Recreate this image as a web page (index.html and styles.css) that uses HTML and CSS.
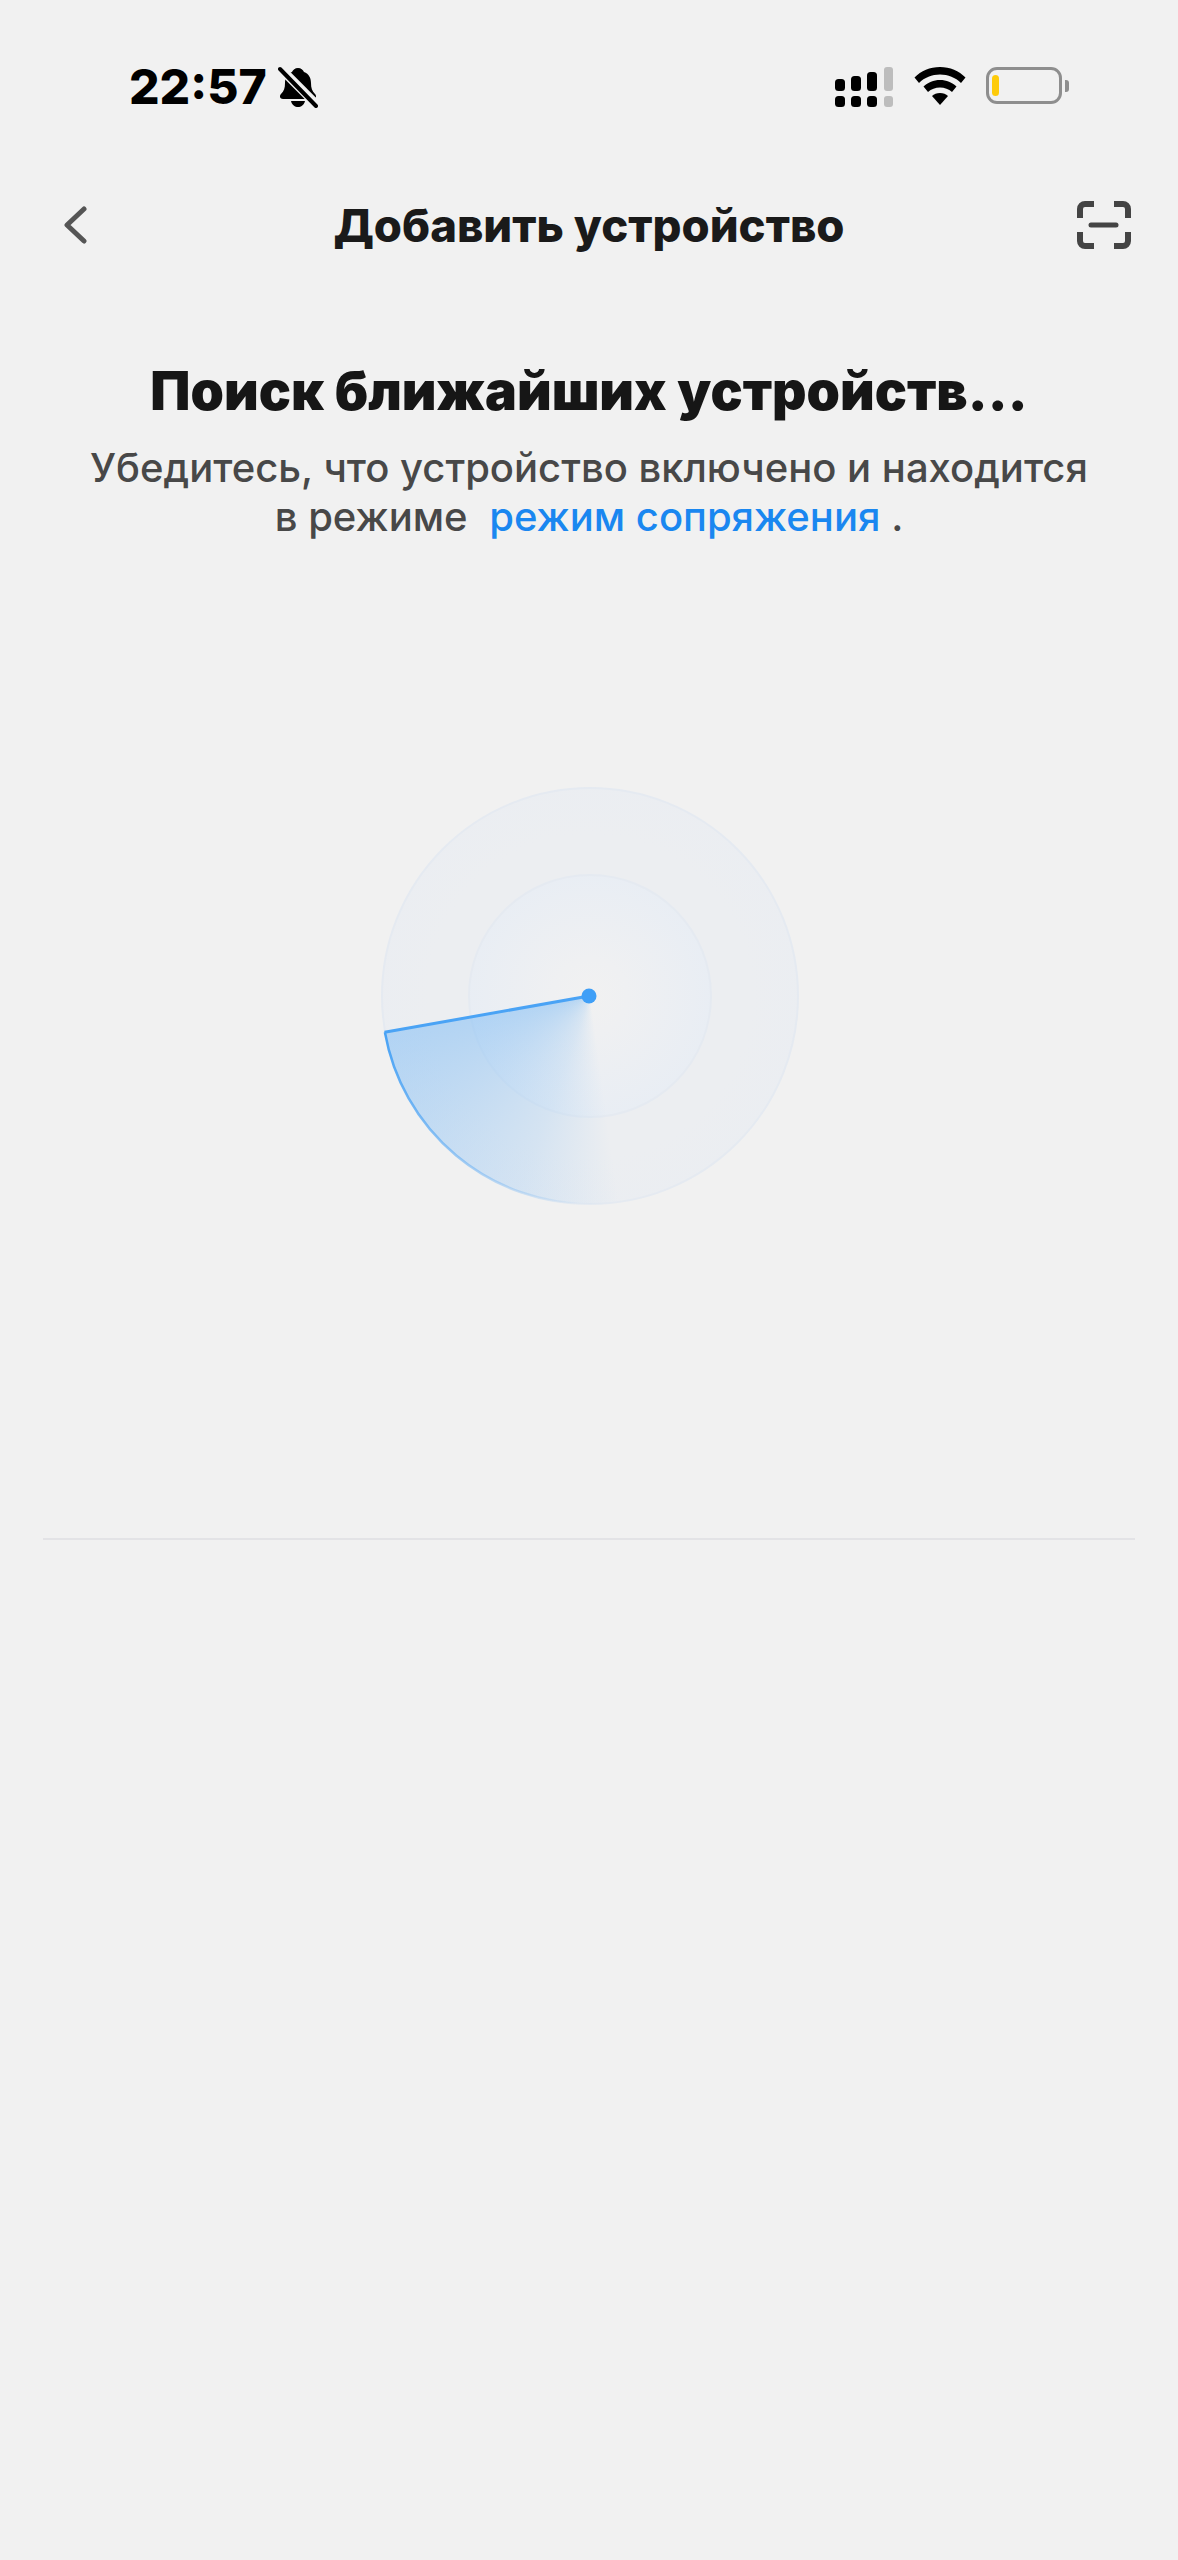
FILE: index.html
```html
<!DOCTYPE html>
<html lang="ru">
<head>
    <meta charset="UTF-8">
    <meta name="viewport" content="width=device-width, initial-scale=1.0">
    <title>Добавить устройство</title>
    <link rel="stylesheet" href="styles.css">
</head>
<body>

<!-- Status bar -->
<div class="status-bar">
    <div class="status-left">
        <span class="time">22:57</span>
        <svg class="bell" width="40" height="42" viewBox="0 0 40 42">
            <path d="M20 2c3 0 5 2 6 4 5 2 7 6 7 11 0 5 1 8 4 11 2 2 1 5-2 5H5c-3 0-4-3-2-5 3-3 4-6 4-11 0-5 2-9 7-11 1-2 3-4 6-4z" fill="#000"/>
            <path d="M13 35h14c-1 4-4 6-7 6s-6-2-7-6z" fill="#000"/>
            <path d="M1 1l38 38" stroke="#f1f1f1" stroke-width="9"/>
            <path d="M2 3l36 37" stroke="#000" stroke-width="4" stroke-linecap="round"/>
        </svg>
    </div>
    <div class="status-right">
        <svg class="signal" width="60" height="42" viewBox="0 0 60 42">
            <rect x="1" y="13" width="10" height="12" rx="3.5" fill="#000"/>
            <rect x="17" y="10" width="10" height="15" rx="3.5" fill="#000"/>
            <rect x="33" y="6" width="10" height="19" rx="3.5" fill="#000"/>
            <rect x="50" y="1" width="9" height="24" rx="3" fill="#bdbdbd"/>
            <rect x="1" y="30" width="10" height="11" rx="3.5" fill="#000"/>
            <rect x="17" y="30" width="10" height="11" rx="3.5" fill="#000"/>
            <rect x="33" y="30" width="10" height="11" rx="3.5" fill="#000"/>
            <rect x="50" y="30" width="9" height="11" rx="3" fill="#bdbdbd"/>
        </svg>
        <svg class="wifi" width="52" height="38" viewBox="0 0 52 38">
            <path d="M26 0c10 0 19 4 25.500 10.500l-4.500 5.500C41.500 10.500 34 7.500 26 7.500S10.500 10.500 5 16L.5 10.500C7 4 16 0 26 0z" fill="#000"/>
            <path d="M26 13c6.500 0 12 2.500 16.500 6.500l-4.500 5.500c-3.300-3-7.400-4.500-12-4.500s-8.700 1.500-12 4.500l-4.500-5.500C14 15.500 19.500 13 26 13z" fill="#000"/>
            <path d="M26 26c3.300 0 6 1.200 8 3L26 38l-8-9c2-1.800 4.700-3 8-3z" fill="#000"/>
        </svg>
        <div class="battery">
            <div class="battery-body"><div class="battery-level"></div></div>
            <div class="battery-cap"></div>
        </div>
    </div>
</div>

<!-- Top navigation -->
<div class="nav">
    <svg class="back" width="24" height="40" viewBox="0 0 24 40">
        <path d="M21 4L4 20l17 16" fill="none" stroke="#555" stroke-width="5" stroke-linecap="round" stroke-linejoin="round"/>
    </svg>
    <div class="nav-title">Добавить устройство</div>
    <svg class="scan" width="54" height="48" viewBox="0 0 54 48">
        <g fill="none" stroke="#444" stroke-width="6">
            <path d="M3 17V8a5 5 0 0 1 5-5h9"/>
            <path d="M37 3h9a5 5 0 0 1 5 5v9"/>
            <path d="M3 31v9a5 5 0 0 0 5 5h9"/>
            <path d="M37 45h9a5 5 0 0 0 5-5v-9"/>
        </g>
        <path d="M14 24h25" stroke="#444" stroke-width="5" stroke-linecap="round"/>
    </svg>
</div>

<!-- Search text -->
<div class="intro">
    <h1>Поиск ближайших устройств...</h1>
    <p>Убедитесь, что устройство включено и находится<br>в режиме <a class="pair-link" href="#">режим сопряжения</a> .</p>
</div>

<!-- Radar -->
<div class="radar-wrap">
    <div class="radar">
        <div class="ring ring-outer"></div>
        <div class="ring ring-inner"></div>
        <div class="sweep"></div>
        <svg class="radar-lines" width="420" height="420" viewBox="0 0 420 420">
            <defs>
                <linearGradient id="edge" gradientUnits="userSpaceOnUse" x1="4" y1="250" x2="200" y2="418">
                    <stop offset="0" stop-color="#4aa3f5"/>
                    <stop offset="1" stop-color="#4aa3f5" stop-opacity="0"/>
                </linearGradient>
            </defs>
            <path d="M4.900 246.200A208 208 0 0 0 210 418" fill="none" stroke="url(#edge)" stroke-width="2.500"/>
            <path d="M4.500 246.300L209 210" fill="none" stroke="#4aa3f5" stroke-width="3"/>
            <circle cx="209" cy="210" r="7.500" fill="#3f9ff7"/>
        </svg>
    </div>
</div>

<div class="divider"></div>

</body>
</html>
```

FILE: styles.css
```css
* {
    box-sizing: border-box;
}

body {
    margin: 0;
    height: 2560px;
    overflow: hidden;
    background: #f1f1f1;
    font-family: "Inter", "Liberation Sans", sans-serif;
}

/* Status bar */
.status-bar {
    height: 172px;
    padding: 66px 109px 0 129px;
    display: flex;
    justify-content: space-between;
    align-items: flex-start;
}

.status-left {
    display: flex;
    align-items: center;
    gap: 11px;
    height: 42px;
}

.time {
    font-size: 48px;
    font-weight: 800;
    line-height: 42px;
    color: #000;
}

.status-right {
    display: flex;
    align-items: flex-start;
    gap: 20px;
}

.wifi {
    margin-top: 1px;
}

.battery {
    display: flex;
    align-items: center;
    gap: 3px;
    margin-top: 1px;
}

.battery-body {
    width: 76px;
    height: 37px;
    border: 3px solid #8e8e8e;
    border-radius: 11px;
    padding: 5px 3px;
}

.battery-level {
    width: 7px;
    height: 21px;
    border-radius: 4px;
    background: #fecb0a;
}

.battery-cap {
    width: 4px;
    height: 12px;
    border-radius: 0 3px 3px 0;
    background: #8e8e8e;
}

/* Navigation */
.nav {
    height: 106px;
    padding: 0 47px;
    display: grid;
    grid-template-columns: 1fr auto 1fr;
    align-items: center;
}

.back {
    margin-left: 16px;
}

.nav-title {
    font-size: 45.500px;
    font-weight: 800;
    color: #1a1a1a;
}

.scan {
    justify-self: end;
}

/* Search text */
.intro {
    margin-top: 80px;
    text-align: center;
}

.intro h1 {
    margin: 0;
    font-size: 53.500px;
    font-weight: 900;
    line-height: 66px;
    color: #161616;
}

.intro p {
    margin: 19px 0 0;
    font-size: 40px;
    font-weight: 500;
    line-height: 49px;
    color: #484848;
}

.pair-link {
    margin-left: 11px;
    color: #1a87f0;
    text-decoration: none;
}

/* Radar */
.radar-wrap {
    margin-top: 245px;
    padding-left: 2px;
    display: flex;
    justify-content: center;
}

.radar {
    position: relative;
    width: 420px;
    height: 420px;
}

.ring {
    position: absolute;
    border-radius: 50%;
    border: 2px solid #e5eaf1;
}

.ring-outer {
    inset: 1px;
    background: radial-gradient(circle, #eceef1 55%, #e9edf3 100%);
}

.ring-inner {
    inset: 88px;
    background: radial-gradient(circle, #f1f1f1 0%, #eff0f2 22%, #e5ecf5 100%);
}

.sweep {
    position: absolute;
    inset: 2px;
    border-radius: 50%;
    background: conic-gradient(rgba(120, 185, 245, 0) 0deg, rgba(120, 185, 245, 0) 172deg, rgba(120, 185, 245, 0.2) 200deg, rgba(120, 185, 245, 0.5) 260deg, rgba(120, 185, 245, 0) 260deg);
}

.radar-lines {
    position: absolute;
    top: 0;
    left: 0;
}

/* Divider under the radar */
.divider {
    height: 2px;
    margin: 332px 43px 0;
    background: #e3e3e6;
}
```
